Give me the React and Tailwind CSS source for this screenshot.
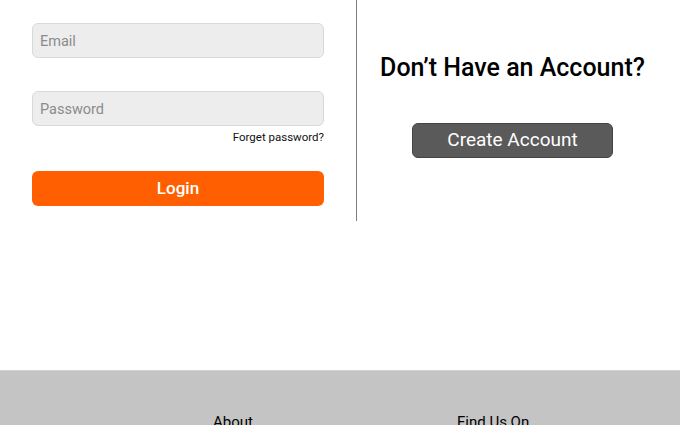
export default function App() {
  return (
    <div className="font-['Roboto',sans-serif] bg-white w-[680px] h-[425px] overflow-hidden">
      <div className="h-[370px] flex items-start">
        <div className="w-[357px] h-[221px] border-r border-[#7d7d7d] pl-8 pt-[23px]">
          <div className="w-[292px]">
            <div className="h-[35px] rounded-md bg-[#ededed] border border-[#d9d9d9] flex items-center px-[7px] pt-[2px] text-[14.5px] text-[#8b8b8b]">
              Email
            </div>
            <div className="h-[35px] mt-[33px] rounded-md bg-[#ededed] border border-[#d9d9d9] flex items-center px-[7px] pt-[2px] text-[14.5px] text-[#8b8b8b]">
              Password
            </div>
            <div className="text-right text-[11.5px] leading-[13px] mt-[5px] text-[#111]">
              Forget password?
            </div>
            <div className="h-[35px] mt-[27px] rounded-md bg-[#ff5f00] flex items-center justify-center text-white text-[17px] font-medium">
              Login
            </div>
          </div>
        </div>
        <div className="flex-1 flex flex-col items-center pr-[12px] pt-[51px]">
          <div className="text-[25px] leading-[34px] font-medium text-black">Don’t Have an Account?</div>
          <div className="mt-[38px] w-[201px] h-[35px] rounded-md bg-[#5a5a5a] border border-[#444] flex items-center justify-center text-white text-[19px]">
            Create Account
          </div>
        </div>
      </div>
      <footer className="h-[55px] bg-[#c4c4c4] border-t border-[#d2d2d2] grid grid-cols-[213px_244px_1fr] pt-[42px]">
        <div></div>
        <div className="text-[15px] leading-[18px] text-black">About</div>
        <div className="text-[15px] leading-[18px] text-black">Find Us On</div>
      </footer>
    </div>
  );
}
